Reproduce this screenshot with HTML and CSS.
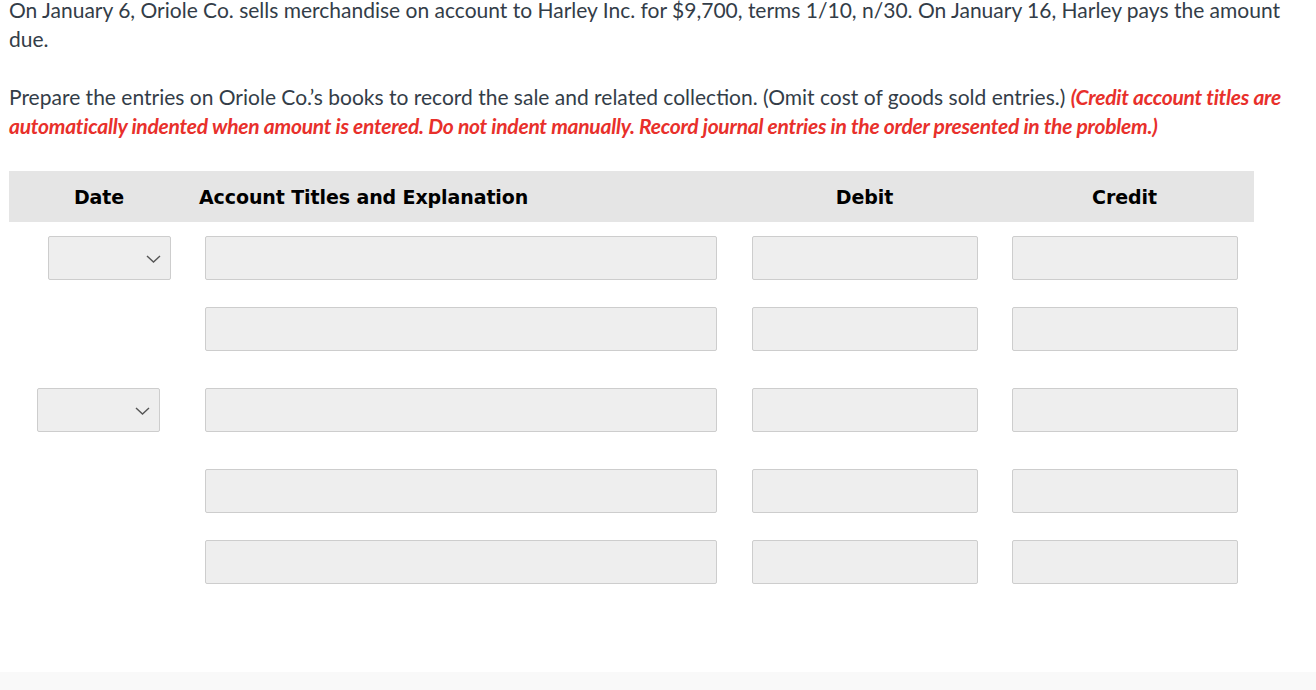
FILE: index.html
```html
<!DOCTYPE html>
<html>
<head>
<meta charset="utf-8">
<link rel="stylesheet" href="styles.css">
</head>
<body>
<div class="page">
  <p class="q q-first">On January 6, Oriole Co. sells merchandise on account to Harley Inc. for $9,700, terms 1/10, n/30. On January 16, Harley pays the amount due.</p>
  <p class="q q-second">Prepare the entries on Oriole Co.’s books to record the sale and related collection. (Omit cost of goods sold entries.) <em class="warn">(Credit account titles are automatically indented when amount is entered. Do not indent manually. Record journal entries in the order presented in the problem.)</em></p>

  <div class="journal">
    <div class="jhead">
      <div class="h h-date">Date</div>
      <div class="h h-acct">Account Titles and Explanation</div>
      <div class="h h-num">Debit</div>
      <div class="h h-num">Credit</div>
    </div>

    <div class="jrow r1">
      <div class="c c-date"><div class="sel sel-a"><svg class="chev" width="15" height="8" viewBox="0 0 15 8"><path d="M1 1 L7.5 7 L14 1" fill="none" stroke="#555" stroke-width="1.4"/></svg></div></div>
      <div class="c c-acct"><div class="inp inp-acct"></div></div>
      <div class="c c-deb"><div class="inp inp-num"></div></div>
      <div class="c c-cred"><div class="inp inp-num"></div></div>
    </div>

    <div class="jrow r2">
      <div class="c c-date"></div>
      <div class="c c-acct"><div class="inp inp-acct"></div></div>
      <div class="c c-deb"><div class="inp inp-num"></div></div>
      <div class="c c-cred"><div class="inp inp-num"></div></div>
    </div>

    <div class="jrow r3">
      <div class="c c-date"><div class="sel sel-b"><svg class="chev" width="15" height="8" viewBox="0 0 15 8"><path d="M1 1 L7.5 7 L14 1" fill="none" stroke="#555" stroke-width="1.4"/></svg></div></div>
      <div class="c c-acct"><div class="inp inp-acct"></div></div>
      <div class="c c-deb"><div class="inp inp-num"></div></div>
      <div class="c c-cred"><div class="inp inp-num"></div></div>
    </div>

    <div class="jrow r3">
      <div class="c c-date"></div>
      <div class="c c-acct"><div class="inp inp-acct"></div></div>
      <div class="c c-deb"><div class="inp inp-num"></div></div>
      <div class="c c-cred"><div class="inp inp-num"></div></div>
    </div>

    <div class="jrow r2">
      <div class="c c-date"></div>
      <div class="c c-acct"><div class="inp inp-acct"></div></div>
      <div class="c c-deb"><div class="inp inp-num"></div></div>
      <div class="c c-cred"><div class="inp inp-num"></div></div>
    </div>
  </div>
</div>
<div class="footer-strip"></div>
</body>
</html>
```
FILE: styles.css
```css
html, body {
  margin: 0;
  padding: 0;
  background: #ffffff;
}
body {
  height: 690px;
  overflow: hidden;
  display: flex;
  flex-direction: column;
}
.page {
  flex: 1;
  padding-left: 9px;
  font-family: Lato, "Liberation Sans", sans-serif;
  color: #333d48;
}
.q {
  margin: 0;
  font-size: 21px;
  line-height: 29px;
  width: 1295px;
}
.q-first {
  margin-top: -5px;
}
.q-second {
  margin-top: 29px;
}
.warn {
  color: #e8302b;
  font-weight: bold;
  font-style: italic;
  letter-spacing: -0.25px;
}
.journal {
  margin-top: 31px;
  width: 1245px;
}
.jhead {
  display: grid;
  grid-template-columns: 180px 545px 261px 259px;
  height: 51px;
  align-items: center;
  background: #e5e5e5;
}
.h {
  font-family: "DejaVu Sans", Verdana, sans-serif;
  font-weight: bold;
  font-size: 19px;
  color: #000;
  letter-spacing: -0.1px;
}
.h-date, .h-num {
  text-align: center;
}
.h-acct {
  padding-left: 10px;
}
.jrow {
  display: grid;
  grid-template-columns: 180px 545px 261px 259px;
  align-items: center;
}
.r1 { margin-top: 14px; }
.r2 { margin-top: 27px; }
.r3 { margin-top: 37px; }
.inp, .sel {
  height: 42px;
  background: #eeeeee;
  border: 1px solid #cdcdcd;
  border-radius: 2px;
  box-sizing: content-box;
}
.inp-acct {
  width: 510px;
  margin-left: 16px;
}
.c-deb .inp-num {
  width: 224px;
  margin-left: 18px;
}
.c-cred .inp-num {
  width: 224px;
  margin-left: 17px;
}
.sel {
  width: 121px;
  display: flex;
  align-items: center;
  justify-content: flex-end;
}
.sel-a { margin-left: 39px; }
.sel-b { margin-left: 28px; }
.chev {
  margin-right: 9px;
  margin-top: 1px;
}
.footer-strip {
  height: 18px;
  background: #f9f9f9;
  flex: none;
}
```
